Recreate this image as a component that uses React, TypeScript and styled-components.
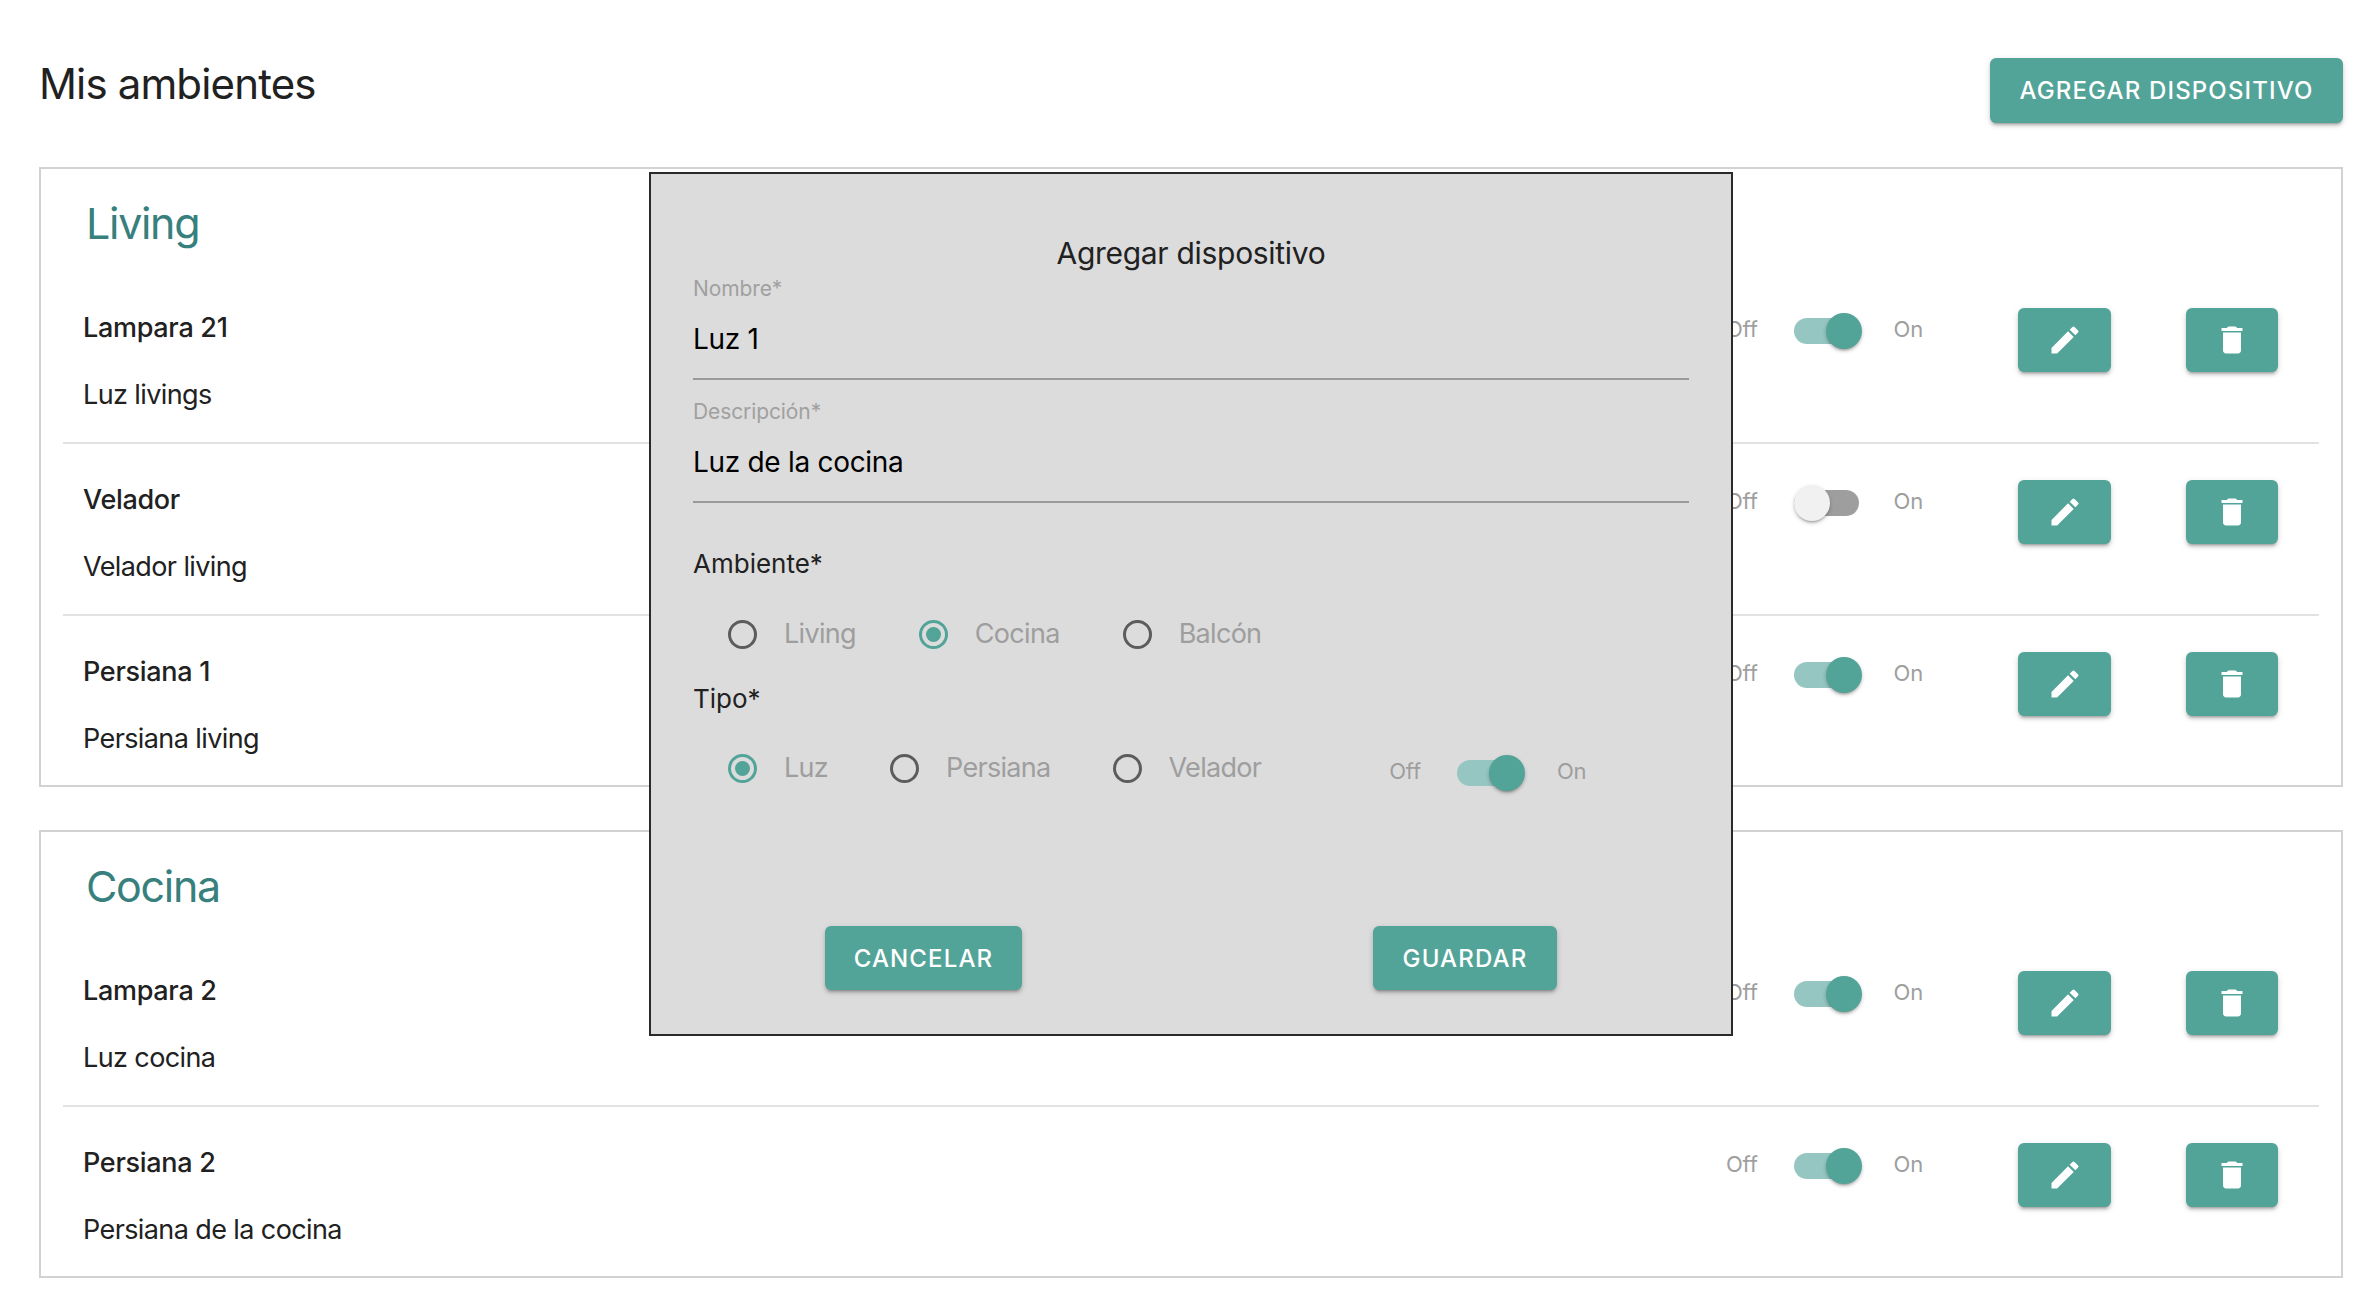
import React from "react";
import styled, { createGlobalStyle } from "styled-components";
import { MdEdit, MdDelete } from "react-icons/md";

const Global = createGlobalStyle`
  html, body { margin: 0; padding: 0; background: #fff; }
  body { font-family: Inter, "Liberation Sans", sans-serif; color: #212121; }
  * { box-sizing: border-box; }
`;

const Page = styled.div`
  position: relative;
  width: 2380px;
  height: 1298px;
  overflow: hidden;
  padding: 0 37px 0 39px;
`;

const Header = styled.header`
  height: 167px;
  display: flex;
  justify-content: space-between;
  align-items: flex-start;
`;

const PageTitle = styled.h1`
  margin: 60px 0 0;
  font-size: 42px;
  line-height: 48px;
  font-weight: 400;
  letter-spacing: -0.85px;
`;

const Button = styled.button<{ $w: number }>`
  width: ${(p) => p.$w}px;
  height: 64px;
  padding: 0;
  border: 0;
  border-radius: 6px;
  background: #52a398;
  color: #fff;
  font-family: inherit;
  font-size: 24px;
  font-weight: 500;
  letter-spacing: 1.15px;
  display: flex;
  align-items: center;
  justify-content: center;
  box-shadow: 0 4px 2px -3px rgba(0, 0, 0, 0.2), 0 3px 3px 0 rgba(0, 0, 0, 0.14), 0 2px 7px 0 rgba(0, 0, 0, 0.12);
  svg { width: 36px; height: 36px; display: block; }
`;

const AddButton = styled(Button)`
  height: 65px;
  margin-top: 58px;
`;

const Card = styled.section<{ $h: number }>`
  border: 2px solid #d2d2d2;
  margin-bottom: 43px;
  height: ${(p) => p.$h}px;
`;

const CardTitle = styled.h2`
  margin: 0;
  height: 103px;
  padding: 28px 0 0 45px;
  font-size: 43px;
  line-height: 52px;
  font-weight: 400;
  color: #37807d;
  letter-spacing: -1.3px;
`;

const Rows = styled.div`
  margin: 0 22px;
`;

const Row = styled.div`
  height: 172px;
  padding: 39px 41px 0 20px;
  display: flex;
  justify-content: space-between;
  align-items: flex-start;
  border-bottom: 2px solid #e2e2e2;
  &:last-child { border-bottom: 0; }
`;

const Info = styled.div`
  display: flex;
  flex-direction: column;
  gap: 33px;
`;

const Name = styled.div`
  font-size: 27px;
  line-height: 34px;
  font-weight: 500;
  letter-spacing: -0.3px;
`;

const Desc = styled.div`
  font-size: 27px;
  line-height: 34px;
  letter-spacing: -0.6px;
`;

const Controls = styled.div`
  display: flex;
  align-items: flex-start;
  margin-top: 2px;
`;

const SwitchRow = styled.div`
  display: flex;
  align-items: flex-start;
`;

const SwitchText = styled.span`
  font-size: 22px;
  line-height: 33px;
  color: #9e9e9e;
  letter-spacing: -0.2px;
`;

const Track = styled.span<{ $on: boolean }>`
  position: relative;
  display: block;
  width: 68px;
  height: 36px;
  margin: 0 32px 0 36px;
  &::before {
    content: "";
    position: absolute;
    left: 0;
    top: 5px;
    width: 65px;
    height: 26px;
    border-radius: 13px;
    background: ${(p) => (p.$on ? "#96c6c1" : "#9e9e9e")};
  }
  &::after {
    content: "";
    position: absolute;
    top: 0;
    left: ${(p) => (p.$on ? 32 : 0)}px;
    width: 36px;
    height: 36px;
    border-radius: 50%;
    background: ${(p) => (p.$on ? "#52a398" : "#f1f1f1")};
    box-shadow: 0 3px 2px -2px rgba(0, 0, 0, 0.2), 0 2px 3px 0 rgba(0, 0, 0, 0.14), 0 2px 5px 0 rgba(0, 0, 0, 0.12);
  }
`;

const Actions = styled.div`
  display: flex;
  gap: 75px;
  margin-left: 95px;
  margin-top: -5px;
`;

const Switch = ({ on }: { on: boolean }) => (
  <SwitchRow>
    <SwitchText>Off</SwitchText>
    <Track $on={on} />
    <SwitchText>On</SwitchText>
  </SwitchRow>
);

const Modal = styled.div`
  position: absolute;
  left: 649px;
  top: 172px;
  width: 1084px;
  height: 864px;
  background: #dcdcdc;
  border: 2px solid #2a2a2a;
  padding: 59px 42px 0;
  display: flex;
  flex-direction: column;
`;

const ModalTitle = styled.h3`
  margin: 0;
  text-align: center;
  font-size: 30px;
  line-height: 40px;
  font-weight: 400;
  letter-spacing: -0.3px;
`;

const Field = styled.div`
  display: flex;
  flex-direction: column;
  height: 107px;
  padding-top: 3px;
  border-bottom: 2px solid #9a9a9a;
  & + & { margin-top: 16px; }
`;

const FieldLabel = styled.label`
  font-size: 21px;
  line-height: 26px;
  color: #a0a0a0;
  letter-spacing: -0.1px;
`;

const FieldValue = styled.div`
  font-size: 28px;
  line-height: 36px;
  color: #000;
  margin-top: 19px;
  letter-spacing: -0.3px;
`;

const Legend = styled.div<{ $mt: number }>`
  font-size: 26px;
  line-height: 32px;
  margin-top: ${(p) => p.$mt}px;
`;

const RadioRow = styled.div<{ $mt?: number; $gap: number }>`
  display: flex;
  align-items: center;
  padding-left: 35px;
  margin-top: ${(p) => p.$mt ?? 0}px;
  gap: ${(p) => p.$gap}px;
`;

const RadioItem = styled.div`
  display: flex;
  align-items: center;
  gap: 27px;
`;

const RadioCircle = styled.span<{ $on: boolean }>`
  position: relative;
  display: block;
  width: 29px;
  height: 29px;
  border-radius: 50%;
  border: 3px solid ${(p) => (p.$on ? "#52a398" : "#5c5c5c")};
  &::after {
    content: "";
    display: ${(p) => (p.$on ? "block" : "none")};
    position: absolute;
    left: 4px;
    top: 4px;
    width: 15px;
    height: 15px;
    border-radius: 50%;
    background: #52a398;
  }
`;

const RadioLabel = styled.span`
  font-size: 27px;
  line-height: 32px;
  color: #9e9e9e;
  letter-spacing: -0.7px;
`;

const TypeRow = styled.div`
  display: flex;
  align-items: flex-start;
  margin-top: 37px;
`;

const ModalSwitch = styled.div`
  margin-left: 128px;
  margin-top: 3px;
`;

const ModalActions = styled.div`
  display: flex;
  margin-top: 135px;
  padding-left: 132px;
  gap: 351px;
`;

const Radio = ({ label, on = false }: { label: string; on?: boolean }) => (
  <RadioItem>
    <RadioCircle $on={on} />
    <RadioLabel>{label}</RadioLabel>
  </RadioItem>
);

const sections = [
  {
    title: "Living",
    devices: [
      { name: "Lampara 21", desc: "Luz livings", on: true },
      { name: "Velador", desc: "Velador living", on: false },
      { name: "Persiana 1", desc: "Persiana living", on: true },
    ],
  },
  {
    title: "Cocina",
    devices: [
      { name: "Lampara 2", desc: "Luz cocina", on: true },
      { name: "Persiana 2", desc: "Persiana de la cocina", on: true },
    ],
  },
];

export default function App() {
  return (
    <Page>
      <Global />
      <Header>
        <PageTitle>Mis ambientes</PageTitle>
        <AddButton $w={353}>AGREGAR DISPOSITIVO</AddButton>
      </Header>
      {sections.map((s) => (
        <Card key={s.title} $h={104 + s.devices.length * 172}>
          <CardTitle>{s.title}</CardTitle>
          <Rows>
            {s.devices.map((d) => (
              <Row key={d.name}>
                <Info>
                  <Name>{d.name}</Name>
                  <Desc>{d.desc}</Desc>
                </Info>
                <Controls>
                  <Switch on={d.on} />
                  <Actions>
                    <Button $w={93} aria-label="Editar"><MdEdit /></Button>
                    <Button $w={92} aria-label="Eliminar"><MdDelete /></Button>
                  </Actions>
                </Controls>
              </Row>
            ))}
          </Rows>
        </Card>
      ))}
      <Modal>
        <ModalTitle>Agregar dispositivo</ModalTitle>
        <Field>
          <FieldLabel>Nombre*</FieldLabel>
          <FieldValue>Luz 1</FieldValue>
        </Field>
        <Field>
          <FieldLabel>Descripción*</FieldLabel>
          <FieldValue>Luz de la cocina</FieldValue>
        </Field>
        <Legend $mt={45}>Ambiente*</Legend>
        <RadioRow $mt={38} $gap={63}>
          <Radio label="Living" />
          <Radio label="Cocina" on />
          <Radio label="Balcón" />
        </RadioRow>
        <Legend $mt={33}>Tipo*</Legend>
        <TypeRow>
          <RadioRow $gap={62}>
            <Radio label="Luz" on />
            <Radio label="Persiana" />
            <Radio label="Velador" />
          </RadioRow>
          <ModalSwitch>
            <Switch on />
          </ModalSwitch>
        </TypeRow>
        <ModalActions>
          <Button $w={197}>CANCELAR</Button>
          <Button $w={184}>GUARDAR</Button>
        </ModalActions>
      </Modal>
    </Page>
  );
}
